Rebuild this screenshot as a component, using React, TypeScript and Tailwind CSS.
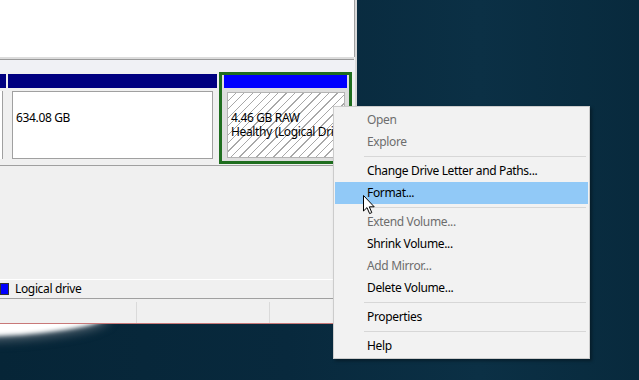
const font = { fontFamily: '"Noto Sans", "Open Sans", sans-serif' };

type Item = { label: string; disabled?: boolean; active?: boolean } | "sep";

const menu: Item[] = [
  { label: "Open", disabled: true },
  { label: "Explore", disabled: true },
  "sep",
  { label: "Change Drive Letter and Paths..." },
  { label: "Format...", active: true },
  "sep",
  { label: "Extend Volume...", disabled: true },
  { label: "Shrink Volume..." },
  { label: "Add Mirror...", disabled: true },
  { label: "Delete Volume..." },
  "sep",
  { label: "Properties" },
  "sep",
  { label: "Help" },
];

function Cursor() {
  return (
    <svg width="13" height="20" viewBox="0 0 13 20" className="absolute left-[363px] top-[195px]">
      <path
        d="M0.5 0.5 L0.5 16 L4 12.6 L6.6 18.6 L8.8 17.6 L6.3 11.8 L11.2 11.8 Z"
        fill="#fff"
        stroke="#000"
        strokeWidth="1"
        strokeLinejoin="round"
      />
    </svg>
  );
}

function ContextMenu() {
  return (
    <div className="absolute left-[333px] top-[106px] w-[257px] h-[253px] bg-[#f2f2f2] border border-[#cccccc] shadow-[2px_2px_3px_rgba(0,0,0,0.35)] px-[1px] py-[2px]">
      {menu.map((it, i) =>
        it === "sep" ? (
          <div key={i} className="h-[7px] flex items-center pl-[29px] pr-[2px]">
            <div className="h-px w-full bg-[#d7d7d7]" />
          </div>
        ) : (
          <div
            key={i}
            className={
              "h-[22px] flex items-center pl-[32px] " +
              (it.active ? "bg-[#91c9f7] " : "") +
              (it.disabled ? "text-[#6d6d6d]" : "text-black")
            }
          >
            {it.label}
          </div>
        )
      )}
    </div>
  );
}

function DiskRow() {
  return (
    <div className="h-[94px] flex bg-[#f0f0f0] border-b border-[#a0a0a0]">
      {/* previous partition edge */}
      <div className="w-[6px] mt-[2px]">
        <div className="h-[14px] bg-[#000080]" />
        <div className="mt-[3px] h-[68px] w-[3px] bg-white border-r border-[#a0a0a0]" />
      </div>

      {/* 634 GB partition */}
      <div className="ml-[2px] w-[209px] mt-[2px]">
        <div className="h-[14px] bg-[#000080]" />
        <div className="px-[4px] pt-[3px]">
          <div className="h-[68px] bg-white border border-[#a0a0a0] pl-[3px] pt-[17px]">634.08 GB</div>
        </div>
      </div>

      {/* selected RAW partition */}
      <div className="ml-[2px] w-[133px] h-[92px] border-[3px] border-[#1f6e1f] bg-[#dedede] px-[2px]">
        <div className="h-[13px] bg-[#0000ff]" />
        <div className="pl-[3px] pr-[2px] pt-[4px]">
          <div className="h-[66px] border border-[#b4b4b4] bg-[repeating-linear-gradient(135deg,#ffffff_0_5px,#a8a8a8_5px_6px)] pl-[3px] pt-[18px] leading-[14px] whitespace-nowrap overflow-hidden">
            <div>4.46 GB RAW</div>
            <div>Healthy (Logical Drive)</div>
          </div>
        </div>
      </div>
    </div>
  );
}

export default function App() {
  return (
    <div
      className="relative w-[639px] h-[380px] overflow-hidden bg-[linear-gradient(90deg,#062537_0%,#08293d_45%,#0b3045_75%,#082a3d_100%)] text-[12px] tracking-[-0.35px] text-black"
      style={font}
    >
      {/* desktop wallpaper light blob */}
      <div className="absolute left-[-200px] top-[290px] w-[310px] h-[47px] rounded-[50%] bg-white blur-[2px] shadow-[0_5px_9px_rgba(110,120,130,0.7)]" />

      {/* Disk Management window */}
      <div className="relative w-[357px] h-[324px] flex flex-col bg-[#f0f0f0] border-r-2 border-[#d9d9d9] border-b border-b-[#c87878]">
        <div className="h-[57px] bg-white border-r border-[#a0a0a0]" />
        <div className="h-[3px] bg-[#dcdcdc] border-b border-[#9a9a9a] mr-[1px]" />
        <div className="h-[12px] bg-[#f0f1f5]" />
        <DiskRow />
        <div className="flex-1 bg-[#f0f0f0]" />
        <div className="h-[20px] flex items-center border-t border-white border-b border-b-[#a0a0a0] gap-[6px]">
          <div className="w-[9px] h-[12px] bg-[#0000ff] border border-[#333]" />
          <span>Logical drive</span>
        </div>
        <div className="h-[24px] flex bg-[#f0f0f0]">
          <div className="w-[137px] border-r border-[#dadada] mt-[3px]" />
          <div className="w-[133px] border-r border-[#dadada] mt-[3px]" />
        </div>
      </div>

      <ContextMenu />
      <Cursor />
    </div>
  );
}
